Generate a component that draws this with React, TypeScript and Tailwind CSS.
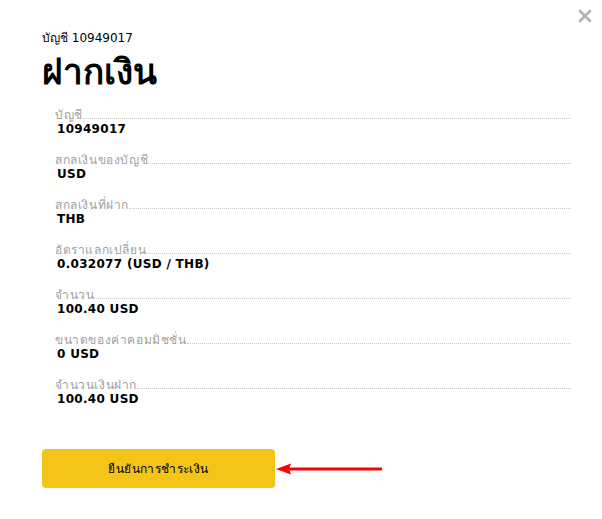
import { X } from 'lucide-react'

const rows = [
  { label: 'บัญชี', value: '10949017' },
  { label: 'สกลเงินของบัญชี', value: 'USD' },
  { label: 'สกลเงินที่ฝาก', value: 'THB' },
  { label: 'อัตราแลกเปลี่ยน', value: '0.032077 (USD / THB)' },
  { label: 'จำนวน', value: '100.40 USD' },
  { label: 'ขนาดของค่าคอมมิชชั่น', value: '0 USD' },
  { label: 'จำนวนเงินฝาก', value: '100.40 USD' },
]

export default function App() {
  return (
    <div className="relative w-[602px] h-[519px] bg-white text-black font-['Tahoma','DejaVu_Sans','Noto_Sans',sans-serif]">
      {/* Close */}
      <button className="absolute top-[6px] right-[7px] text-[#b3b3b3]">
        <X size={20} strokeWidth={3.2} />
      </button>

      <div className="pl-[42px] pr-[31px] pt-[30px]">
        <p className="text-[12px] leading-[16px]">บัญชี 10949017</p>
        <h1 className="mt-[6px] text-[35px] leading-[40px] font-bold">ฝากเงิน</h1>

        <div className="mt-[17px] pl-[13px] flex flex-col">
          {rows.map((r) => (
            <div key={r.label} className="h-[45px]">
              <div className="flex items-end">
                <span className="text-[12px] leading-[13px] tracking-[0.6px] text-[#a0a0a0]">{r.label}</span>
                <span className="flex-1 mb-[3px] border-b border-dotted border-[#c8c8c8]" />
              </div>
              <p className="pl-[2px] text-[12px] leading-[14px] font-bold tracking-[0.3px]">{r.value}</p>
            </div>
          ))}
        </div>

        <div className="mt-[25px] flex items-center">
          <button className="w-[233px] h-[39px] rounded-[4px] bg-[#f4c518] text-[12px] text-black tracking-[0.4px]">
            ยืนยันการชำระเงิน
          </button>
          <svg width="106" height="12" viewBox="0 0 106 12" className="ml-[1px]">
            <line x1="12" y1="6" x2="105" y2="6" stroke="#ff0000" strokeWidth="3" strokeLinecap="round" />
            <polygon points="0,6 15,0.5 13,6 15,11.5" fill="#ff0000" />
          </svg>
        </div>
      </div>
    </div>
  )
}
